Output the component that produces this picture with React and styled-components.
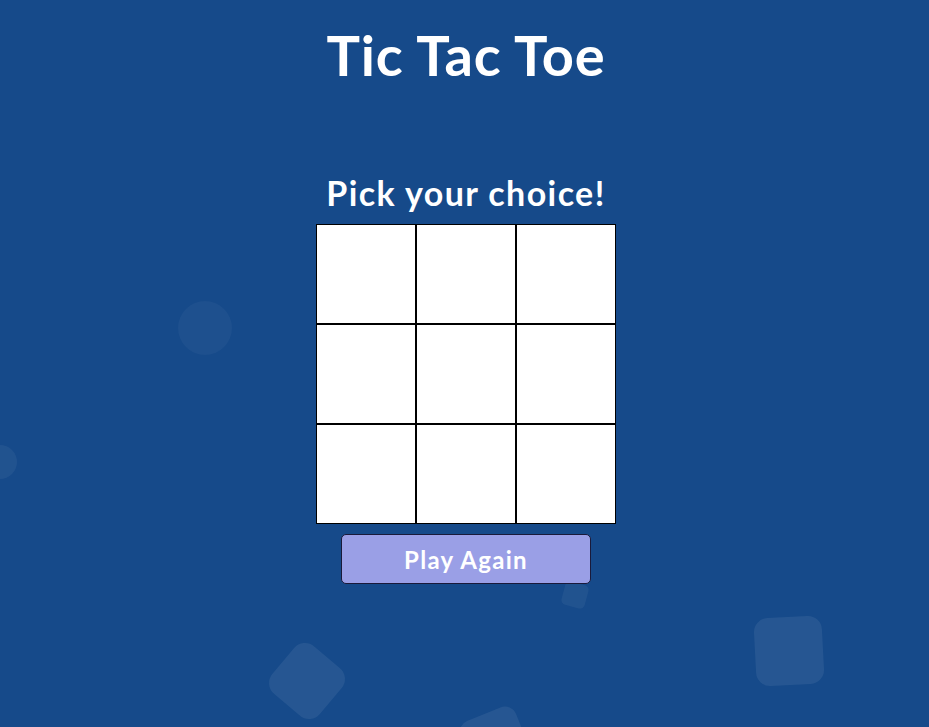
import React from "react";
import styled, { createGlobalStyle } from "styled-components";

const Global = createGlobalStyle`
  html, body { margin: 0; padding: 0; }
  body {
    background: #164a8a;
    font-family: "Lato", "Noto Sans", sans-serif;
    overflow: hidden;
  }
`;

const Page = styled.div`
  position: relative;
  width: 100vw;
  height: 100vh;
  overflow: hidden;
  background: #164a8a;
`;

const Shapes = styled.ul`
  position: absolute;
  inset: 0;
  margin: 0;
  padding: 0;
  list-style: none;
  z-index: 0;
`;

const Shape = styled.li`
  position: absolute;
  background: rgba(255, 255, 255, ${(p) => p.$alpha});
  border-radius: ${(p) => p.$radius};
`;

const Content = styled.main`
  position: relative;
  z-index: 1;
  display: flex;
  flex-direction: column;
  align-items: center;
  padding-left: 3px;
`;

const Title = styled.h1`
  margin: 22px 0 0;
  font-size: 56px;
  line-height: 66px;
  font-weight: 700;
  letter-spacing: 0.8px;
  color: #fff;
`;

const Subtitle = styled.h2`
  margin: 83px 0 0;
  font-size: 34px;
  line-height: 44px;
  font-weight: 700;
  letter-spacing: 1.4px;
  color: #fff;
`;

const Board = styled.div`
  margin-top: 9px;
  display: grid;
  grid-template-columns: repeat(3, 100px);
  grid-template-rows: repeat(3, 100px);
`;

const Cell = styled.button`
  box-sizing: border-box;
  width: 100px;
  height: 100px;
  padding: 0;
  background: #fff;
  border: 1px solid #000;
  border-radius: 0;
  cursor: pointer;
`;

const PlayAgain = styled.button`
  margin-top: 10px;
  box-sizing: border-box;
  width: 250px;
  height: 50px;
  background: #9a9fe6;
  border: 1px solid #1a1a3a;
  border-radius: 5px;
  color: #fff;
  font-family: "Lato", "Noto Sans", sans-serif;
  font-size: 24px;
  font-weight: 700;
  letter-spacing: 1.3px;
  cursor: pointer;
`;

const shapes = [
  { left: 178, top: 301, w: 54, h: 54, r: "50%", rot: 0, a: 0.035 },
  { left: -17, top: 445, w: 34, h: 34, r: "50%", rot: 0, a: 0.05 },
  { left: 276, top: 650, w: 62, h: 62, r: "14px", rot: 40, a: 0.07 },
  { left: 465, top: 712, w: 60, h: 60, r: "12px", rot: -22, a: 0.07 },
  { left: 563, top: 583, w: 24, h: 24, r: "5px", rot: 15, a: 0.05 },
  { left: 755, top: 617, w: 68, h: 68, r: "14px", rot: -3, a: 0.07 },
];

export default function App() {
  return (
    <>
      <Global />
      <Page>
        <Shapes>
          {shapes.map((s, i) => (
            <Shape
              key={i}
              $radius={s.r}
              $alpha={s.a}
              style={{
                left: s.left,
                top: s.top,
                width: s.w,
                height: s.h,
                transform: `rotate(${s.rot}deg)`,
              }}
            />
          ))}
        </Shapes>
        <Content>
          <Title>Tic Tac Toe</Title>
          <Subtitle>Pick your choice!</Subtitle>
          <Board>
            {Array.from({ length: 9 }).map((_, i) => (
              <Cell key={i} aria-label={`cell ${i + 1}`} />
            ))}
          </Board>
          <PlayAgain>Play Again</PlayAgain>
        </Content>
      </Page>
    </>
  );
}
